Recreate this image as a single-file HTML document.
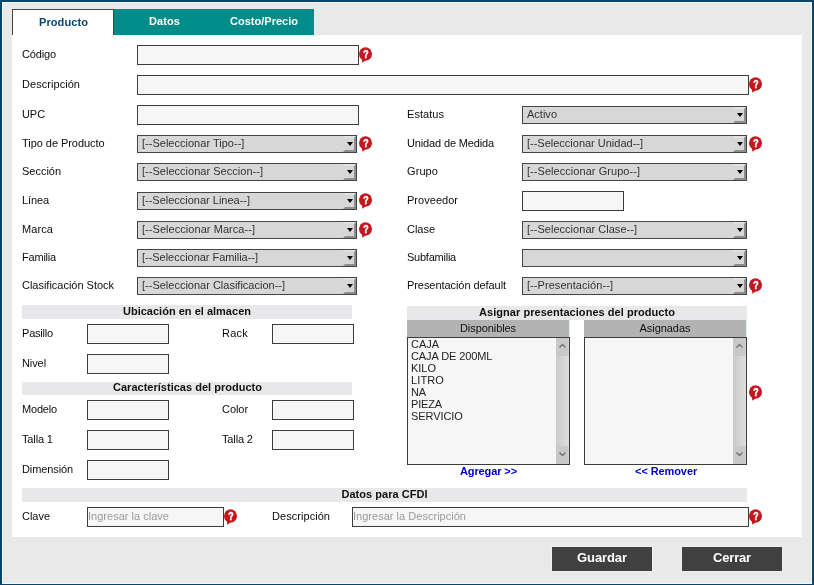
<!DOCTYPE html>
<html><head><meta charset="utf-8"><title>Producto</title>
<style>
*{box-sizing:border-box;margin:0;padding:0}
html,body{width:814px;height:585px;overflow:hidden}
body{background:#e9e9e9;font-family:"Liberation Sans",Arial,sans-serif;font-size:11px;color:#0c0c0c;position:relative}
#w{position:absolute;left:0;top:0;width:814px;height:585px;will-change:transform}
#frame{position:absolute;left:0;top:0;width:814px;height:585px;border:2px solid #08456b;border-bottom-width:1px}
#frame2{position:absolute;left:2px;top:2px;width:810px;height:582px;border:1px solid #f5f5f5}
.a{position:absolute}
#panel{left:12px;top:35px;width:790px;height:502px;background:#fff}
.tab{top:9px;height:26px;font-weight:bold;font-size:11px;text-align:center;line-height:13px}
#t1{left:12px;width:102px;background:#fff;border:1px solid #444;border-bottom:none;color:#08446a;padding-top:6px;padding-left:1px}
#t2{left:114px;width:100px;background:#008c89;color:#fff;padding-top:6px;padding-left:1px}
#t3{left:214px;width:100px;background:#008c89;color:#fff;padding-top:6px}
.l{position:absolute;white-space:nowrap;line-height:13px;height:13px}
.i{position:absolute;height:20px;border:1px solid #3c3c3c;background:#f6f6f6}
.s{position:absolute;height:18px;border:1px solid #444;background:#d7d7d7;line-height:14px;padding-left:4px;color:#333;white-space:nowrap;overflow:hidden}
.s b{position:absolute;right:0;top:0;width:13px;height:16px;border:2px solid;border-color:#e2e2e2 #8e8e8e #8e8e8e #d7d7d7;font-weight:normal}
.s b:after{content:"";position:absolute;left:1.5px;top:4.4px;border:3.5px solid transparent;border-top:4px solid #000;border-bottom:none;width:0;height:0}
.h{position:absolute;background:#e8e8ea;height:14px;line-height:13px;text-align:center;font-weight:bold;color:#111}
.q{position:absolute;width:14px;height:16px}
.btn{position:absolute;top:546px;width:102px;height:26px;border:1px solid #efefef;background:#404040;color:#fff;font-weight:bold;font-size:13px;text-align:center;line-height:15px;padding-top:3px}
.ph{color:#9a9a9a;padding-left:0;line-height:16px;white-space:nowrap;overflow:hidden}
.lb{position:absolute;border:1px solid #3c3c3c;background:#f6f6f6;height:128px;width:163px;line-height:12px;padding-left:3px;color:#222}
.lh{position:absolute;background:#b3b3b3;border-right:1px solid #dcf3f1;height:17px;line-height:13px;padding-top:2px;text-align:center;color:#111;width:163px}
.lk{position:absolute;color:#0000c8;font-weight:bold;text-align:center;width:163px;line-height:13px}
.sb{position:absolute;right:0;top:0;width:13px;height:126px;background:linear-gradient(90deg,#c9c9c9,#dedede)}
.sb i{position:absolute;left:0;width:13px;height:18px;background:#c8c8c8;border-right:1px solid #d2d2d2}
.sb svg{position:absolute;left:0;top:0}
</style></head><body><div id="w">
<div id="frame"></div><div id="frame2"></div>
<div class="a" id="panel"></div>
<div class="a tab" id="t1" style="letter-spacing:0.091px;">Producto</div>
<div class="a tab" id="t2" style="letter-spacing:0.088px;">Datos</div>
<div class="a tab" id="t3" style="letter-spacing:0.013px;">Costo/Precio</div>
<div class="l" style="letter-spacing:-0.143px;left:22px;top:48px">Código</div>
<div class="i" style="left:137px;top:45px;width:222px"></div>
<svg class="q" style="left:359px;top:47px" viewBox="0 0 14 16"><ellipse cx="6.5" cy="6.9" rx="6.5" ry="6.7" fill="#c3181f"/><path d="M2.9 11.3L3.3 15.8L7.6 12.8Z" fill="#c3181f"/><text transform="translate(6.9 11) scale(.8 1)" font-family="Liberation Sans,Arial,sans-serif" font-weight="bold" font-size="11" fill="#fff" stroke="#fff" stroke-width=".5" text-anchor="middle">?</text></svg>
<div class="l" style="letter-spacing:0.049px;left:22px;top:78px">Descripción</div>
<div class="i" style="left:137px;top:75px;width:612px"></div>
<svg class="q" style="left:749px;top:77px" viewBox="0 0 14 16"><ellipse cx="6.5" cy="6.9" rx="6.5" ry="6.7" fill="#c3181f"/><path d="M2.9 11.3L3.3 15.8L7.6 12.8Z" fill="#c3181f"/><text transform="translate(6.9 11) scale(.8 1)" font-family="Liberation Sans,Arial,sans-serif" font-weight="bold" font-size="11" fill="#fff" stroke="#fff" stroke-width=".5" text-anchor="middle">?</text></svg>
<div class="l" style="letter-spacing:-0.075px;left:22px;top:108px">UPC</div>
<div class="i" style="left:137px;top:105px;width:222px"></div>
<div class="l" style="letter-spacing:-0.048px;left:22px;top:137px">Tipo de Producto</div>
<div class="s" style="letter-spacing:0.014px;left:137px;top:135px;width:220px">[--Seleccionar Tipo--]<b></b></div>
<svg class="q" style="left:359px;top:136px" viewBox="0 0 14 16"><ellipse cx="6.5" cy="6.9" rx="6.5" ry="6.7" fill="#c3181f"/><path d="M2.9 11.3L3.3 15.8L7.6 12.8Z" fill="#c3181f"/><text transform="translate(6.9 11) scale(.8 1)" font-family="Liberation Sans,Arial,sans-serif" font-weight="bold" font-size="11" fill="#fff" stroke="#fff" stroke-width=".5" text-anchor="middle">?</text></svg>
<div class="l" style="letter-spacing:-0.019px;left:22px;top:165px">Sección</div>
<div class="s" style="letter-spacing:0.023px;left:137px;top:163px;width:220px">[--Seleccionar Seccion--]<b></b></div>
<div class="l" style="letter-spacing:-0.105px;left:22px;top:194px">Línea</div>
<div class="s" style="letter-spacing:-0.009px;left:137px;top:192px;width:220px">[--Seleccionar Linea--]<b></b></div>
<svg class="q" style="left:359px;top:193px" viewBox="0 0 14 16"><ellipse cx="6.5" cy="6.9" rx="6.5" ry="6.7" fill="#c3181f"/><path d="M2.9 11.3L3.3 15.8L7.6 12.8Z" fill="#c3181f"/><text transform="translate(6.9 11) scale(.8 1)" font-family="Liberation Sans,Arial,sans-serif" font-weight="bold" font-size="11" fill="#fff" stroke="#fff" stroke-width=".5" text-anchor="middle">?</text></svg>
<div class="l" style="letter-spacing:0.088px;left:22px;top:223px">Marca</div>
<div class="s" style="letter-spacing:0.050px;left:137px;top:221px;width:220px">[--Seleccionar Marca--]<b></b></div>
<svg class="q" style="left:359px;top:222px" viewBox="0 0 14 16"><ellipse cx="6.5" cy="6.9" rx="6.5" ry="6.7" fill="#c3181f"/><path d="M2.9 11.3L3.3 15.8L7.6 12.8Z" fill="#c3181f"/><text transform="translate(6.9 11) scale(.8 1)" font-family="Liberation Sans,Arial,sans-serif" font-weight="bold" font-size="11" fill="#fff" stroke="#fff" stroke-width=".5" text-anchor="middle">?</text></svg>
<div class="l" style="letter-spacing:-0.207px;left:22px;top:251px">Familia</div>
<div class="s" style="letter-spacing:-0.030px;left:137px;top:249px;width:220px">[--Seleccionar Familia--]<b></b></div>
<div class="l" style="letter-spacing:-0.016px;left:22px;top:279px">Clasificación Stock</div>
<div class="s" style="letter-spacing:-0.001px;left:137px;top:277px;width:220px">[--Seleccionar Clasificacion--]<b></b></div>
<div class="l" style="letter-spacing:0.045px;left:407px;top:108px">Estatus</div>
<div class="s" style="letter-spacing:0.008px;left:522px;top:106px;width:225px">Activo<b></b></div>
<div class="l" style="letter-spacing:-0.143px;left:407px;top:137px">Unidad de Medida</div>
<div class="s" style="letter-spacing:-0.006px;left:522px;top:135px;width:225px">[--Seleccionar Unidad--]<b></b></div>
<svg class="q" style="left:749px;top:136px" viewBox="0 0 14 16"><ellipse cx="6.5" cy="6.9" rx="6.5" ry="6.7" fill="#c3181f"/><path d="M2.9 11.3L3.3 15.8L7.6 12.8Z" fill="#c3181f"/><text transform="translate(6.9 11) scale(.8 1)" font-family="Liberation Sans,Arial,sans-serif" font-weight="bold" font-size="11" fill="#fff" stroke="#fff" stroke-width=".5" text-anchor="middle">?</text></svg>
<div class="l" style="letter-spacing:0.086px;left:407px;top:165px">Grupo</div>
<div class="s" style="letter-spacing:0.049px;left:522px;top:163px;width:225px">[--Seleccionar Grupo--]<b></b></div>
<div class="l" style="letter-spacing:0.028px;left:407px;top:194px">Proveedor</div>
<div class="i" style="left:522px;top:191px;width:102px"></div>
<div class="l" style="letter-spacing:-0.025px;left:407px;top:223px">Clase</div>
<div class="s" style="letter-spacing:0.025px;left:522px;top:221px;width:225px">[--Seleccionar Clase--]<b></b></div>
<div class="l" style="letter-spacing:-0.236px;left:407px;top:251px">Subfamilia</div>
<div class="s" style="left:522px;top:249px;width:225px"><b></b></div>
<div class="l" style="letter-spacing:-0.064px;left:407px;top:279px">Presentación default</div>
<div class="s" style="letter-spacing:0.057px;left:522px;top:277px;width:225px">[--Presentación--]<b></b></div>
<svg class="q" style="left:749px;top:278px" viewBox="0 0 14 16"><ellipse cx="6.5" cy="6.9" rx="6.5" ry="6.7" fill="#c3181f"/><path d="M2.9 11.3L3.3 15.8L7.6 12.8Z" fill="#c3181f"/><text transform="translate(6.9 11) scale(.8 1)" font-family="Liberation Sans,Arial,sans-serif" font-weight="bold" font-size="11" fill="#fff" stroke="#fff" stroke-width=".5" text-anchor="middle">?</text></svg>
<div class="h" style="letter-spacing:0.010px;left:22px;top:305px;width:330px;height:14px"><span style="position:relative;top:0px;left:0px">Ubicación en el almacen</span></div>
<div class="l" style="letter-spacing:-0.201px;left:22px;top:327px">Pasillo</div>
<div class="i" style="left:87px;top:324px;width:82px"></div>
<div class="l" style="letter-spacing:0.235px;left:222px;top:327px">Rack</div>
<div class="i" style="left:272px;top:324px;width:82px"></div>
<div class="l" style="letter-spacing:-0.090px;left:22px;top:357px">Nivel</div>
<div class="i" style="left:87px;top:354px;width:82px"></div>
<div class="h" style="letter-spacing:0.016px;left:22px;top:382px;width:330px;height:13px"><span style="position:relative;top:-1px;left:0.5px">Características del producto</span></div>
<div class="l" style="letter-spacing:-0.180px;left:22px;top:403px">Modelo</div>
<div class="i" style="left:87px;top:400px;width:82px"></div>
<div class="l" style="letter-spacing:-0.057px;left:222px;top:403px">Color</div>
<div class="i" style="left:272px;top:400px;width:82px"></div>
<div class="l" style="letter-spacing:-0.145px;left:22px;top:433px">Talla 1</div>
<div class="i" style="left:87px;top:430px;width:82px"></div>
<div class="l" style="letter-spacing:-0.145px;left:222px;top:433px">Talla 2</div>
<div class="i" style="left:272px;top:430px;width:82px"></div>
<div class="l" style="letter-spacing:-0.107px;left:22px;top:463px">Dimensión</div>
<div class="i" style="left:87px;top:460px;width:82px"></div>
<div class="h" style="letter-spacing:0.046px;left:407px;top:306px;width:340px;height:14px"><span style="position:relative;top:0px;left:0px">Asignar presentaciones del producto</span></div>
<div class="lh" style="letter-spacing:-0.079px;left:407px;top:320px">Disponibles</div>
<div class="lh" style="letter-spacing:-0.041px;left:584px;top:320px">Asignadas</div>
<div class="lb" style="left:407px;top:337px"><div style="letter-spacing:-0.029px;">CAJA</div><div style="letter-spacing:-0.088px;">CAJA DE 200ML</div><div style="letter-spacing:-0.017px;">KILO</div><div style="letter-spacing:0.121px;">LITRO</div><div style="letter-spacing:-0.140px;">NA</div><div style="letter-spacing:-0.157px;">PIEZA</div><div style="letter-spacing:-0.071px;">SERVICIO</div><div class="sb"><i style="top:0"></i><i style="bottom:0"></i><svg width="13" height="126"><path d="M3.5 9.6L6.5 6.6L9.5 9.6M3.5 114.4L6.5 117.4L9.5 114.4" fill="none" stroke="#727272" stroke-width="1.4"/></svg></div></div>
<div class="lb" style="left:584px;top:337px"><div class="sb"><i style="top:0"></i><i style="bottom:0"></i><svg width="13" height="126"><path d="M3.5 9.6L6.5 6.6L9.5 9.6M3.5 114.4L6.5 117.4L9.5 114.4" fill="none" stroke="#727272" stroke-width="1.4"/></svg></div></div>
<svg class="q" style="left:749px;top:385px" viewBox="0 0 14 16"><ellipse cx="6.5" cy="6.9" rx="6.5" ry="6.7" fill="#c3181f"/><path d="M2.9 11.3L3.3 15.8L7.6 12.8Z" fill="#c3181f"/><text transform="translate(6.9 11) scale(.8 1)" font-family="Liberation Sans,Arial,sans-serif" font-weight="bold" font-size="11" fill="#fff" stroke="#fff" stroke-width=".5" text-anchor="middle">?</text></svg>
<div class="lk" style="letter-spacing:-0.108px;left:407px;top:465px">Agregar &gt;&gt;</div>
<div class="lk" style="letter-spacing:-0.098px;left:584.6px;top:465px">&lt;&lt; Remover</div>
<div class="h" style="letter-spacing:0.029px;left:22px;top:488px;width:725px;height:14px"><span style="position:relative;top:0px;left:0px">Datos para CFDI</span></div>
<div class="l" style="letter-spacing:-0.025px;left:22px;top:510px">Clave</div>
<div class="i ph" style="letter-spacing:0.017px;left:87px;top:507px;width:137px">Ingresar la clave</div>
<svg class="q" style="left:224px;top:509px" viewBox="0 0 14 16"><ellipse cx="6.5" cy="6.9" rx="6.5" ry="6.7" fill="#c3181f"/><path d="M2.9 11.3L3.3 15.8L7.6 12.8Z" fill="#c3181f"/><text transform="translate(6.9 11) scale(.8 1)" font-family="Liberation Sans,Arial,sans-serif" font-weight="bold" font-size="11" fill="#fff" stroke="#fff" stroke-width=".5" text-anchor="middle">?</text></svg>
<div class="l" style="letter-spacing:0.049px;left:272px;top:510px">Descripción</div>
<div class="i ph" style="letter-spacing:0.022px;left:352px;top:507px;width:397px">Ingresar la Descripción</div>
<svg class="q" style="left:749px;top:509px" viewBox="0 0 14 16"><ellipse cx="6.5" cy="6.9" rx="6.5" ry="6.7" fill="#c3181f"/><path d="M2.9 11.3L3.3 15.8L7.6 12.8Z" fill="#c3181f"/><text transform="translate(6.9 11) scale(.8 1)" font-family="Liberation Sans,Arial,sans-serif" font-weight="bold" font-size="11" fill="#fff" stroke="#fff" stroke-width=".5" text-anchor="middle">?</text></svg>
<div class="btn" style="letter-spacing:-0.082px;left:551px">Guardar</div>
<div class="btn" style="letter-spacing:-0.171px;left:681px">Cerrar</div>
</div></body></html>
